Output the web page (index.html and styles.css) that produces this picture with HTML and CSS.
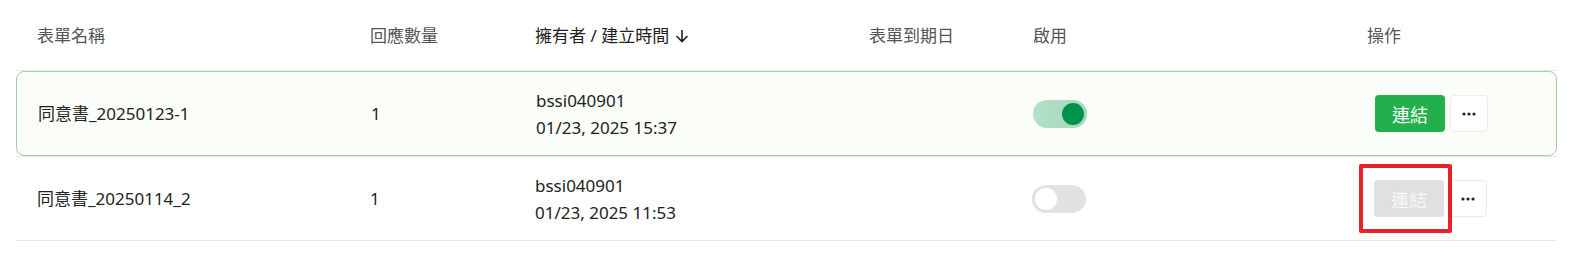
FILE: index.html
```html
<!DOCTYPE html>
<html lang="zh-Hant">
<head>
    <meta charset="UTF-8">
    <meta name="viewport" content="width=device-width, initial-scale=1.0">
    <title>表單列表</title>
    <link rel="stylesheet" href="styles.css">
</head>
<body>

    <div class="form-table">

        <!-- 표 머리 -->
        <div class="row head">
            <div class="cell">表單名稱</div>
            <div class="cell">回應數量</div>
            <div class="cell sorted">擁有者 / 建立時間
                <svg class="sort-icon" width="14" height="14" viewBox="0 0 14 14">
                    <path d="M7 1v11.5M1.5 7l5.5 5.5 5.5-5.5" fill="none" stroke="#222" stroke-width="1.6"/>
                </svg>
            </div>
            <div class="cell">表單到期日</div>
            <div class="cell">啟用</div>
            <div class="cell">操作</div>
        </div>

        <div class="row active">
            <div class="cell">同意書_20250123-1</div>
            <div class="cell">1</div>
            <div class="cell owner">bssi040901<br>01/23, 2025 15:37</div>
            <div class="cell"></div>
            <div class="cell"><span class="switch on"><span class="knob"></span></span></div>
            <div class="cell actions">
                <span class="link-wrap"><button class="btn-link">連結</button></span>
                <button class="btn-more">
                    <svg width="14" height="4" viewBox="0 0 14 4"><circle cx="2" cy="2" r="1.6"/><circle cx="7" cy="2" r="1.6"/><circle cx="12" cy="2" r="1.6"/></svg>
                </button>
            </div>
        </div>

        <div class="row">
            <div class="cell">同意書_20250114_2</div>
            <div class="cell">1</div>
            <div class="cell owner">bssi040901<br>01/23, 2025 11:53</div>
            <div class="cell"></div>
            <div class="cell"><span class="switch"><span class="knob"></span></span></div>
            <div class="cell actions">
                <span class="link-wrap">
                    <button class="btn-link disabled">連結</button>
                    <span class="mark"></span>
                </span>
                <button class="btn-more">
                    <svg width="14" height="4" viewBox="0 0 14 4"><circle cx="2" cy="2" r="1.6"/><circle cx="7" cy="2" r="1.6"/><circle cx="12" cy="2" r="1.6"/></svg>
                </button>
            </div>
        </div>

    </div>

</body>
</html>
```

FILE: styles.css
```css
body {
    margin: 0;
    background-color: #fff;
    font-family: 'Noto Sans', 'Noto Sans CJK TC', sans-serif;
    font-size: 17px;
    color: #222;
}

.form-table {
    margin: 0 13px 0 16px;
}

.row {
    display: grid;
    grid-template-columns: 333px 165px 334px 164px 334px 1fr;
    align-items: center;
    height: 83px;
    border-top: 1px solid #e6e6e6;
}

.row:last-child {
    border-bottom: 1px solid #e6e6e6;
}

.head {
    height: 70px;
    border-top: none;
    border-bottom: 1px solid #e6e6e6;
    color: #555;
}

.head + .row {
    border-top: none;
}

.row.active {
    border: 1px solid #a3d3a0;
    border-radius: 8px;
    background-color: #fbfdf8;
}

.row.active + .row {
    border-top: 1px solid #e6e6e6;
}

.cell {
    padding-left: 21px;
    line-height: 27px;
}

.sorted {
    color: #222;
    display: flex;
    align-items: center;
    gap: 6px;
}

.sort-icon {
    margin-top: 2px;
}

/* 토글 */
.switch {
    display: block;
    width: 54px;
    height: 28px;
    border-radius: 14px;
    background-color: #e2e2e2;
    position: relative;
    margin-left: -1px;
}

.switch .knob {
    position: absolute;
    top: 3px;
    left: 3px;
    width: 22px;
    height: 22px;
    border-radius: 50%;
    background-color: #fff;
}

.switch.on {
    background: linear-gradient(to right, #b3e0c8, #a3d9bb);
}

.switch.on .knob {
    left: auto;
    right: 3px;
    background-color: #00914a;
}

/* 버튼 */
.actions {
    display: flex;
    align-items: center;
    gap: 5px;
    padding-left: 28px;
}

.link-wrap {
    position: relative;
    display: flex;
}

.btn-link {
    width: 70px;
    height: 37px;
    border: none;
    border-radius: 4px;
    background-color: #21b04b;
    color: #fff;
    font-family: 'Noto Sans CJK TC', sans-serif;
    font-size: 18px;
    padding: 0;
}

.btn-link.disabled {
    background-color: #e0e0e0;
    color: #f7f7f7;
}

.btn-more {
    width: 38px;
    height: 37px;
    border: 1px solid #ececec;
    border-radius: 4px;
    background-color: #fff;
    padding: 0;
    display: flex;
    align-items: center;
    justify-content: center;
}

.btn-more svg {
    fill: #222;
}

/* 빨간 표시 */
.mark {
    position: absolute;
    top: -16px;
    left: -15px;
    right: -8px;
    bottom: -16px;
    border: 4px solid #e8212b;
    border-radius: 2px;
}
```
